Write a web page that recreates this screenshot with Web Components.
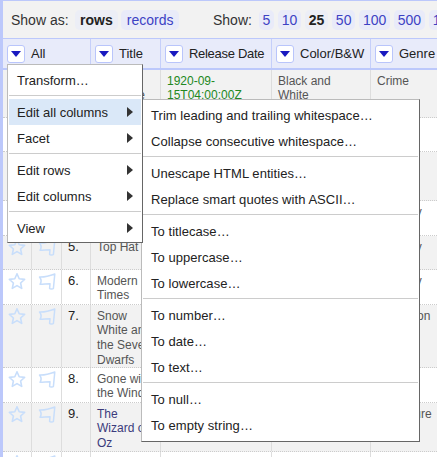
<!doctype html>
<html><head><meta charset="utf-8">
<style>
html,body{margin:0;padding:0;width:437px;height:457px;overflow:hidden;background:#fff;font-family:"Liberation Sans",Arial,sans-serif;}
</style></head><body>
<or-app>
  <or-toolbar>
    <span slot="left-label">Show as:</span>
    <or-pill slot="left" current>rows</or-pill>
    <or-pill slot="left">records</or-pill>
    <span slot="right-label">Show:</span>
    <or-pill slot="right">5</or-pill><or-pill slot="right">10</or-pill><or-pill slot="right" current>25</or-pill><or-pill slot="right">50</or-pill><or-pill slot="right">100</or-pill><or-pill slot="right">500</or-pill><or-pill slot="right">1000</or-pill>
  </or-toolbar>
  <or-header>
    <or-head-cell span="3">All</or-head-cell>
    <or-head-cell>Title</or-head-cell>
    <or-head-cell style="letter-spacing:-.3px">Release Date</or-head-cell>
    <or-head-cell>Color/B&amp;W</or-head-cell>
    <or-head-cell>Genre</or-head-cell>
  </or-header>
  <or-row h="48" n="1" title="The Revenge" date="1920-09-15T04:00:00Z" color="Black and White" genre="Crime" odd></or-row>
  <or-row h="34" n="2" title="The Kid" genre="Drama"></or-row>
  <or-row h="49" n="3" title="Metropolis" genre="Drama" odd></or-row>
  <or-row h="35" n="4" title="City Lights" genre="Comedy"></or-row>
  <or-row h="34" n="5" title="Top Hat" genre="Comedy" odd></or-row>
  <or-row h="35" n="6" title="Modern Times" genre="Comedy"></or-row>
  <or-row h="63" n="7" title="Snow White and the Seven Dwarfs" genre="Animation" odd></or-row>
  <or-row h="35" n="8" title="Gone with the Wind" genre="Drama"></or-row>
  <or-row h="49" n="9" title="The Wizard of Oz" genre="Adventure" odd linked></or-row>
  <or-row h="34" n="10" title="Citizen Kane" genre="Drama"></or-row>
  <or-menu style="left:7px;top:64px;width:132px">
    <or-item>Transform…</or-item><or-sep></or-sep>
    <or-item arrow active>Edit all columns</or-item><or-item arrow>Facet</or-item><or-sep></or-sep>
    <or-item arrow>Edit rows</or-item><or-item arrow>Edit columns</or-item><or-sep></or-sep>
    <or-item arrow>View</or-item>
  </or-menu>
  <or-menu style="left:141px;top:99px;width:275px;padding-bottom:3px;z-index:1;letter-spacing:.05px">
    <or-item>Trim leading and trailing whitespace…</or-item><or-item>Collapse consecutive whitespace…</or-item><or-sep></or-sep>
    <or-item>Unescape HTML entities…</or-item><or-item>Replace smart quotes with ASCII…</or-item><or-sep></or-sep>
    <or-item>To titlecase…</or-item><or-item>To uppercase…</or-item><or-item>To lowercase…</or-item><or-sep></or-sep>
    <or-item>To number…</or-item><or-item>To date…</or-item><or-item>To text…</or-item><or-sep></or-sep>
    <or-item>To null…</or-item><or-item>To empty string…</or-item>
  </or-menu>
</or-app>
<script>
const COLS='29px 30px 29px 70px 111px 99px 99px';
function def(name,css,html,init){
  customElements.define(name,class extends HTMLElement{
    constructor(){super();this.attachShadow({mode:'open'}).innerHTML='<style>'+css+'</style>'+html;}
    connectedCallback(){if(init)init(this);}
  });
}
def('or-app',`:host{display:block;position:relative;width:437px;height:457px;overflow:hidden;box-sizing:border-box;border-top:1px solid #bcc8fb;border-left:3px solid #bcc8fb;font:13px "Liberation Sans",Arial,sans-serif;color:#222}`,`<slot></slot>`);
def('or-toolbar',`:host{display:flex;align-items:center;height:37px;background:#f2f2f2;border-bottom:1px solid #bcc8fb;font-size:14px;color:#333;white-space:nowrap;overflow:hidden}
.l{display:flex;align-items:center;gap:3px;padding-left:8px;--pp:5.5px}.l ::slotted(span){margin-right:3px}
.r{display:flex;align-items:center;gap:4.5px;margin-left:34px;--pp:3.5px}.r ::slotted(span){margin-right:2.5px}`,
`<div class="l"><slot name="left-label"></slot><slot name="left"></slot></div><div class="r"><slot name="right-label"></slot><slot name="right"></slot></div>`);
def('or-pill',`:host{display:block;padding:0 var(--pp,5px);height:20px;line-height:20px;border-radius:5px;background:#e9ebf9;color:#3d42c4;flex:none}
:host([current]){background:#eceef6;color:#222;font-weight:bold}`,`<slot></slot>`);
def('or-header',`:host{display:grid;grid-template-columns:${COLS};height:29px;background:#e8ebfa;border-bottom:2px solid #bcc8fb;white-space:nowrap;overflow:hidden}`,`<slot></slot>`);
def('or-head-cell',`:host{display:flex;align-items:center;gap:6px;padding-left:4px;border-right:1px solid #c5cffa;box-sizing:border-box;height:29px}
.b{width:16px;height:16px;background:#fff;border:1px solid #b9c5fb;border-radius:3px;display:flex;align-items:center;justify-content:center;flex:none}
svg{display:block}`,`<span class="b"><svg width="10" height="6" viewBox="0 0 10 6"><path d="M0 0H10L5 6Z" fill="#1a1ac0"/></svg></span><slot></slot>`,
el=>{const s=el.getAttribute('span');if(s)el.style.gridColumn='span '+s;});
def('or-row',`:host{display:grid;grid-template-columns:${COLS};box-sizing:border-box;border-bottom:1px dotted #ccc;font-size:12px;line-height:14.67px;color:#555;background:#fff;overflow:hidden}
:host([odd]){background:#f2f2f2}
.c{border-right:1px solid #ddd;padding:3.5px 10px 0 6px;box-sizing:border-box;overflow:hidden}
.ic{padding:3px 0 0 5px}
.ic.f{padding-left:6px}
.n{color:#222;font-size:13px;padding-top:4px;padding-right:0}
.t{padding-right:5px}
.d{color:#282}
.t.link{color:#3b3b7c}
.g{overflow:visible;white-space:nowrap}
svg{display:block}`,
`<div class="c ic"><svg width="18" height="18" viewBox="0 0 18 18"><path d="M9 .8 11.2 5.8 16.6 6.4 12.6 10 13.7 15.4 9 12.6 4.3 15.4 5.4 10 1.4 6.4 6.8 5.8Z" fill="none" stroke="#c8defb" stroke-width="1.6" stroke-linejoin="round"/></svg></div>
<div class="c ic f"><svg width="18" height="18" viewBox="0 0 18 18"><path d="M1.5 4C6 4.2 11 3.2 16.8 1 L15.4 15.4 C15 16.2 12 16.2 11.6 15.4 L12 10.7 C8.5 10.7 5.5 11.3 2 11.3 C3.5 9 3.5 6.5 1.5 4Z" fill="none" stroke="#c8defb" stroke-width="1.5" stroke-linejoin="round"/></svg></div>
<div class="c n"></div><div class="c t"></div><div class="c d"></div><div class="c cw"></div><div class="c g"></div>`,
el=>{const r=el.shadowRoot,a=k=>el.getAttribute(k)||'';
 el.style.height=a('h')+'px';
 r.querySelector('.n').textContent=a('n')+'.';
 const t=r.querySelector('.t');t.textContent=a('title');if(el.hasAttribute('linked'))t.classList.add('link');
 r.querySelector('.d').textContent=a('date');r.querySelector('.cw').textContent=a('color');r.querySelector('.g').textContent=a('genre');
 el.removeAttribute('title');
});
def('or-menu',`:host{display:block;position:absolute;box-sizing:content-box;margin-left:-3px;margin-top:-1px;background:#fff;border:1px solid #bbb;border-right-color:#666;border-bottom-color:#666;padding:2px 1px 1px;z-index:2}`,`<slot></slot>`);
def('or-item',`:host{display:flex;align-items:center;justify-content:space-between;height:26px;padding:0 8px;font-size:13px;color:#222;white-space:nowrap}
:host([active]){background:#dae8f8}
svg{display:none}:host([arrow]) svg{display:block}`,
`<span><slot></slot></span><svg width="6" height="10" viewBox="0 0 6 10"><path d="M0 0 6 5 0 10Z" fill="#333"/></svg>`);
def('or-sep',`:host{display:block;height:1px;background:#ccc;margin:2px 0 3px}`,``);
</script>
</body></html>
